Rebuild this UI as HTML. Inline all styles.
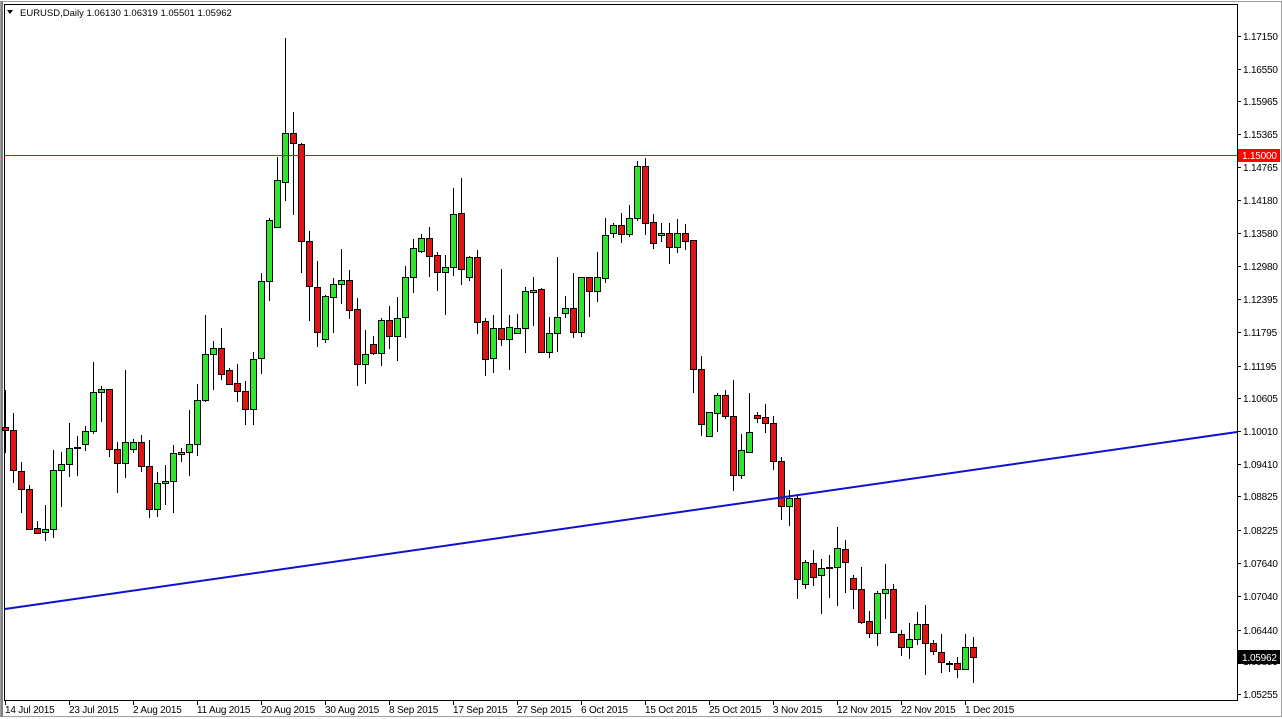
<!DOCTYPE html>
<html><head><meta charset="utf-8"><style>
html,body{margin:0;padding:0;background:#fff;width:1282px;height:719px;overflow:hidden}
svg{display:block}
text{font-family:"Liberation Sans","DejaVu Sans",sans-serif;font-size:10px;fill:#000;letter-spacing:-0.2px}
</style></head><body>
<svg id="s" width="1282" height="719" xmlns="http://www.w3.org/2000/svg">
<rect x="0" y="0" width="1282" height="719" fill="#fff"/>
<rect x="0.5" y="1.5" width="1281" height="715" fill="none" stroke="#a0a0a0" stroke-width="1"/>
<line x1="2" y1="1" x2="2" y2="717" stroke="#808080" stroke-width="2"/>
<rect x="4.5" y="4.5" width="1233" height="696" fill="none" stroke="#000" stroke-width="1"/>
<g id="c"></g>
<rect x="5" y="155" width="1232" height="1" fill="#ff0000"/>
<line x1="5" y1="609" x2="1237" y2="432" stroke="#1010d0" stroke-width="2"/>
<path d="M7 10 L13 10 L10 14 Z" fill="#000"/>
<text x="20" y="16" style="font-size:9.5px;letter-spacing:0">EURUSD,Daily  1.06130 1.06319 1.05501 1.05962</text>
<g id="ax"></g>
<g id="dx"></g>
<rect x="1238" y="149" width="42" height="13" fill="#ff0000"/>
<text x="1242" y="159" style="fill:#fff">1.15000</text>
<rect x="1238" y="650" width="42" height="14" fill="#000"/>
<text x="1242" y="661" style="fill:#fff">1.05962</text>
</svg>
<script>
var d=[
[5,390,453,427,430,0],[13,413,483,430,470,0],[21,462,513,471,489,0],[29,485,529,489,529,0],[37,521,533,528,533,0],
[45,505,541,529,532,1],[53,450,538,470,529,1],[61,452,507,464,470,1],[69,423,477,448,464,1],[77,436,476,447,448,1],
[85,426,451,431,444,1],[93,362,434,392,431,1],[101,386,422,389,392,1],[109,389,457,389,449,0],[117,442,493,449,463,0],
[125,370,478,442,463,1],[133,439,453,442,449,1],[141,435,472,442,466,0],[149,440,518,466,509,0],[157,472,517,483,509,1],
[165,465,505,481,483,1],[173,445,513,453,481,1],[181,448,462,452,454,1],[189,410,476,444,452,1],[197,384,456,400,444,1],
[205,315,402,354,400,1],[213,341,390,348,354,1],[221,328,380,348,374,0],[229,368,385,370,384,0],[237,364,402,383,391,0],
[245,381,425,391,409,0],[253,352,425,359,409,1],[261,273,374,281,358,1],[269,218,301,220,281,1],[277,157,228,180,227,1],
[285,38,201,133,182,1],[293,112,215,133,143,0],[301,143,273,144,241,0],[309,231,321,241,286,0],[317,261,347,287,332,0],
[325,295,343,296,339,1],[333,278,333,284,297,1],[341,249,304,280,284,1],[349,270,319,280,310,0],[357,298,386,309,364,0],
[365,330,384,354,364,1],[373,336,355,344,353,0],[381,318,366,320,353,1],[389,306,349,320,336,0],[397,297,361,318,336,1],
[405,266,338,277,317,1],[413,239,293,248,277,1],[421,234,253,238,251,1],[429,227,277,238,256,0],[437,252,291,255,272,0],
[445,255,315,267,272,1],[453,188,276,214,267,1],[461,178,285,213,269,0],[469,256,281,257,277,1],[477,250,334,257,322,0],
[485,318,376,321,359,0],[493,315,373,328,358,1],[501,269,346,328,339,0],[509,315,370,327,339,1],[517,314,333,328,333,1],
[525,287,353,291,328,1],[533,277,326,290,292,1],[541,288,353,289,352,0],[549,317,358,333,352,1],[557,257,352,317,333,1],
[565,296,318,308,313,1],[573,273,338,308,332,0],[581,277,337,277,332,1],[589,277,317,277,291,0],[597,252,302,277,291,1],
[605,218,283,235,278,1],[613,223,238,225,233,1],[621,213,243,225,234,0],[629,205,237,218,234,1],[637,161,221,166,218,1],
[645,158,235,166,223,0],[653,214,249,222,243,0],[661,223,242,233,235,1],[669,223,264,233,247,0],[677,219,253,233,247,1],
[685,224,250,233,241,0],[693,240,393,240,369,0],[701,356,436,369,424,0],[709,412,437,412,436,1],[717,393,432,395,413,1],
[725,390,419,395,416,0],[733,380,491,416,475,0],[741,434,479,450,475,1],[749,393,452,432,452,1],[757,412,423,415,418,0],
[765,404,433,417,423,0],[773,416,470,423,461,0],[781,457,520,461,506,0],[789,490,526,498,506,1],[797,495,599,498,579,0],
[805,560,589,562,584,1],[813,550,586,563,577,0],[821,559,614,568,575,1],[829,555,598,567,568,1],[837,527,606,548,567,1],
[845,540,593,549,562,0],[853,575,609,578,589,0],[861,567,624,589,622,0],[869,611,638,621,633,0],[877,591,646,593,633,1],
[885,564,619,589,593,1],[893,584,633,589,632,0],[901,630,656,634,647,0],[909,623,659,639,647,1],[917,612,645,624,639,1],
[925,605,675,624,643,0],[933,640,655,643,651,0],[941,634,673,652,662,0],[949,661,672,663,664,1],[957,657,678,663,669,0],
[965,634,669,647,669,1],[973,637,683,647,657,0]];
var h='';
d.forEach(function(c){var x=c[0];
h+='<line x1="'+(x+.5)+'" y1="'+c[1]+'" x2="'+(x+.5)+'" y2="'+c[2]+'" stroke="#000"/>';
var bh=Math.max(1,c[4]-c[3]);
h+='<rect x="'+(x-2.5)+'" y="'+(c[3]+.5)+'" width="6" height="'+bh+'" fill="'+(c[5]?'#2de62d':'#e01414')+'" stroke="#000"/>';});
document.getElementById('c').innerHTML=h;
var p=[["1.17150",36],["1.16550",69],["1.15965",101],["1.15365",134],["1.14765",167],["1.14180",200],["1.13580",233],["1.12980",266],["1.12395",299],["1.11795",332],["1.11195",366],["1.10605",398],["1.10010",431],["1.09410",464],["1.08825",496],["1.08225",530],["1.07640",563],["1.07040",596],["1.06440",630],["1.05855",661],["1.05255",694]];
var a='';p.forEach(function(q){a+='<line x1="1238" y1="'+(q[1]+.5)+'" x2="1241" y2="'+(q[1]+.5)+'" stroke="#000"/><text x="1243" y="'+(q[1]+4)+'">'+q[0]+'</text>';});
document.getElementById('ax').innerHTML=a;
var t=["14 Jul 2015","23 Jul 2015","2 Aug 2015","11 Aug 2015","20 Aug 2015","30 Aug 2015","8 Sep 2015","17 Sep 2015","27 Sep 2015","6 Oct 2015","15 Oct 2015","25 Oct 2015","3 Nov 2015","12 Nov 2015","22 Nov 2015","1 Dec 2015"];
var b='';t.forEach(function(s,i){var x=5+64*i;b+='<line x1="'+(x+.5)+'" y1="701" x2="'+(x+.5)+'" y2="705" stroke="#000"/><text x="'+(x)+'" y="713">'+s+'</text>';});
document.getElementById('dx').innerHTML=b;
</script>
</body></html>
